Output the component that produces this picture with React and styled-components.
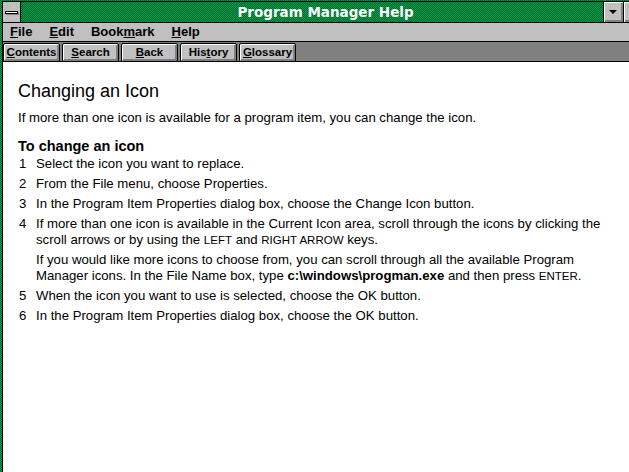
import React from 'react';
import styled, { createGlobalStyle } from 'styled-components';

const GlobalStyle = createGlobalStyle`
  html, body {
    margin: 0;
    padding: 0;
    background: #ffffff;
  }
`;

const dither = `repeating-conic-gradient(#0a9a48 0 25%, #006a2c 0 50%) 0 0 / 2px 2px`;

const Window = styled.div`
  width: 629px;
  height: 472px;
  box-sizing: border-box;
  padding: 1px 0 0 2px;
  background: ${dither};
  display: flex;
  flex-direction: column;
  overflow: hidden;
`;

const Inner = styled.div`
  flex: 1;
  display: flex;
  flex-direction: column;
  border-left: 1px solid #000;
  border-top: 1px solid #000;
  background: #fff;
  min-height: 0;
`;

const TitleBar = styled.div`
  display: flex;
  height: 20px;
  flex-shrink: 0;
  border-bottom: 1px solid #000;
`;

const ControlBox = styled.div`
  flex: 0 0 17px;
  background: #c0c0c0;
  border-right: 1px solid #000;
  display: flex;
  align-items: center;
  justify-content: center;
`;

const ControlBar = styled.div`
  width: 11px;
  height: 1px;
  background: #fff;
  border: 1px solid #000;
  box-shadow: 1px 1px 0 #808080;
  margin-left: -1px;
`;

const Title = styled.div`
  flex: 0 0 582px;
  box-sizing: border-box;
  padding-left: 27px;
  background: ${dither};
  color: #fff;
  font-family: "DejaVu Sans", sans-serif;
  font-weight: bold;
  font-size: 13.5px;
  line-height: 20px;
  text-align: center;
  white-space: nowrap;
`;

const CapButton = styled.div`
  flex: 0 0 19px;
  border-left: 1px solid #000;
  background: #c0c0c0;
  box-shadow: inset 1px 1px 0 #fff, inset -2px -2px 0 #808080;
  display: flex;
  align-items: center;
  justify-content: center;
`;

const DownArrow = styled.div`
  width: 0;
  height: 0;
  border-left: 4px solid transparent;
  border-right: 4px solid transparent;
  border-top: 4px solid #000;
  margin: 0 1px 1px 0;
`;

const MenuBar = styled.div`
  display: flex;
  gap: 17px;
  height: 18px;
  flex-shrink: 0;
  padding-left: 7px;
  background: #c0c0c0;
  border-bottom: 1px solid #000;
  font-family: "Liberation Sans", Arial, sans-serif;
  font-weight: bold;
  font-size: 13px;
  line-height: 18px;
  color: #000;
`;

const MenuItem = styled.span`
  white-space: nowrap;
`;

const ButtonBar = styled.div`
  display: flex;
  gap: 2px;
  height: 20px;
  flex-shrink: 0;
  box-sizing: border-box;
  padding-top: 1px;
  background: #808080;
  border-bottom: 1px solid #000;
`;

const NavButton = styled.div`
  width: 57px;
  height: 19px;
  box-sizing: border-box;
  border: 1px solid #000;
  border-radius: 2px;
  background: #c0c0c0;
  box-shadow: inset 1px 1px 0 #fff, inset -2px -2px 0 #808080;
  font-family: "Liberation Sans", Arial, sans-serif;
  font-weight: bold;
  font-size: 11.5px;
  line-height: 16px;
  text-align: center;
  color: #000;
  white-space: nowrap;
`;

const Content = styled.div`
  flex: 1;
  padding: 18px 25px 0 15px;
  font-family: "Liberation Sans", Arial, sans-serif;
  font-size: 13.2px;
  line-height: 16px;
  color: #000;
`;

const Heading = styled.h1`
  margin: 0;
  font-weight: normal;
  font-size: 18px;
  line-height: 22px;
`;

const Intro = styled.p`
  margin: 8px 0 0;
`;

const SubHeading = styled.h2`
  margin: 12px 0 0;
  font-size: 14.5px;
  line-height: 16px;
  font-weight: bold;
`;

const Steps = styled.ol`
  list-style: none;
  margin: 2px 0 0;
  padding: 0;
`;

const Step = styled.li`
  display: flex;
  margin-bottom: 4px;
`;

const Num = styled.span`
  flex: 0 0 18px;
  padding-left: 1px;
  box-sizing: border-box;
`;

const StepBody = styled.div`
  flex: 1;
`;

const Note = styled.p`
  margin: 4px 0 0;
`;

const Key = styled.span`
  font-size: 11.5px;
  line-height: 1;
`;

const Code = styled.b`
  font-weight: bold;
`;

const steps = [
  { n: '1', text: 'Select the icon you want to replace.' },
  { n: '2', text: 'From the File menu, choose Properties.' },
  { n: '3', text: 'In the Program Item Properties dialog box, choose the Change Icon button.' },
  {
    n: '4',
    text: (
      <>
        If more than one icon is available in the Current Icon area, scroll through the icons by clicking the
        scroll arrows or by using the <Key>LEFT</Key> and <Key>RIGHT ARROW</Key> keys.
      </>
    ),
    note: (
      <>
        If you would like more icons to choose from, you can scroll through all the available Program
        Manager icons. In the File Name box, type <Code>c:\windows\progman.exe</Code> and then press <Key>ENTER</Key>.
      </>
    ),
  },
  { n: '5', text: 'When the icon you want to use is selected, choose the OK button.' },
  { n: '6', text: 'In the Program Item Properties dialog box, choose the OK button.' },
];

export default function App() {
  return (
    <>
      <GlobalStyle />
      <Window>
        <Inner>
          <TitleBar>
            <ControlBox>
              <ControlBar />
            </ControlBox>
            <Title>Program Manager Help</Title>
            <CapButton>
              <DownArrow />
            </CapButton>
            <CapButton />
          </TitleBar>
          <MenuBar>
            <MenuItem><u>F</u>ile</MenuItem>
            <MenuItem><u>E</u>dit</MenuItem>
            <MenuItem>Book<u>m</u>ark</MenuItem>
            <MenuItem><u>H</u>elp</MenuItem>
          </MenuBar>
          <ButtonBar>
            <NavButton><u>C</u>ontents</NavButton>
            <NavButton><u>S</u>earch</NavButton>
            <NavButton><u>B</u>ack</NavButton>
            <NavButton>His<u>t</u>ory</NavButton>
            <NavButton><u>G</u>lossary</NavButton>
          </ButtonBar>
          <Content>
            <Heading>Changing an Icon</Heading>
            <Intro>If more than one icon is available for a program item, you can change the icon.</Intro>
            <SubHeading>To change an icon</SubHeading>
            <Steps>
              {steps.map((s) => (
                <Step key={s.n}>
                  <Num>{s.n}</Num>
                  <StepBody>
                    {s.text}
                    {s.note && <Note>{s.note}</Note>}
                  </StepBody>
                </Step>
              ))}
            </Steps>
          </Content>
        </Inner>
      </Window>
    </>
  );
}
